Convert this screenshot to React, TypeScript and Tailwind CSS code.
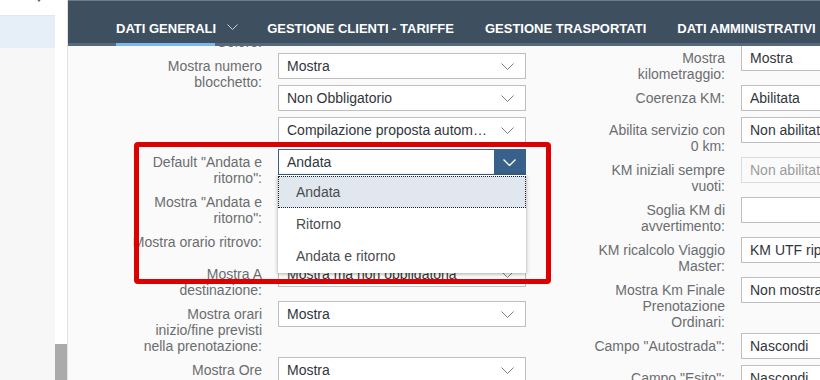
import React from "react";

const labelCls =
  "w-[132px] shrink-0 text-right pt-[5px] pb-[3px] leading-4 text-[14px] text-[#6a6d70] whitespace-nowrap";

function Chevron({ color = "#7b7f83", width = 1, w = 13, h = 7 }: { color?: string; width?: number; w?: number; h?: number }) {
  return (
    <svg width={w} height={h} viewBox={`0 0 ${w} ${h}`} className="shrink-0">
      <polyline points={`0.5,0.5 ${w / 2},${h - 0.5} ${w - 0.5},0.5`} fill="none" stroke={color} strokeWidth={width} />
    </svg>
  );
}

function Select({ value, disabled, noIcon }: { value?: string; disabled?: boolean; noIcon?: boolean }) {
  return (
    <div
      className={
        "h-[26px] w-[248px] flex items-center justify-between pl-[8px] pr-[11px] text-[14px] border " +
        (disabled ? "border-[#dcdcdc] bg-[#fafafa] text-[#9a9c9e]" : "border-[#bfbfbf] bg-white text-[#32363a]")
      }
    >
      <span className="whitespace-nowrap overflow-hidden">{value}</span>
      {!noIcon && <Chevron />}
    </div>
  );
}

function Row({ label, children }: { label: string[]; children: React.ReactNode }) {
  return (
    <div className="flex items-start">
      <div className={labelCls}>
        {label.map((l) => (
          <div key={l}>{l}</div>
        ))}
      </div>
      <div className="ml-4 flex flex-col gap-[6px] pb-[6px]">{children}</div>
    </div>
  );
}

function OpenSelect() {
  const options = ["Andata", "Ritorno", "Andata e ritorno"];
  return (
    <div className="relative w-[248px]">
      <div className="h-[26px] flex border border-[#3d5f80] bg-white text-[14px] text-[#32363a]">
        <div className="flex-1 flex items-center pl-[8px]">Andata</div>
        <div className="w-[31px] bg-[#37618a] flex items-center justify-center">
          <Chevron color="#ffffff" width={1.4} />
        </div>
      </div>
      <div className="absolute z-10 left-0 top-[26px] w-[248px] bg-white shadow-[0_1px_4px_rgba(0,0,0,0.35)] py-px">
        {options.map((o, i) => (
          <div
            key={o}
            className={
              "h-[32px] flex items-center pl-[17px] text-[14px] text-[#4a4d50] border " +
              (i === 0 ? "bg-[#e0e7ef] border-dotted border-[#222]" : "border-transparent")
            }
          >
            {o}
          </div>
        ))}
      </div>
    </div>
  );
}

export default function App() {
  const tabs = ["GESTIONE CLIENTI - TARIFFE", "GESTIONE TRASPORTATI", "DATI AMMINISTRATIVI"];

  return (
    <div
      className="relative w-[820px] h-[380px] overflow-hidden flex bg-[#fafafa]"
      style={{ fontFamily: '"Liberation Sans", Arial, sans-serif' }}
    >
      {/* side list */}
      <aside className="w-[55px] shrink-0 flex flex-col bg-[#f7f7f7]">
        <div className="h-[15px] bg-white relative overflow-hidden">
          <svg width="8" height="6" viewBox="0 0 8 6" className="absolute left-[35px] top-[-3px]">
            <path d="M0 0 L4 5 L8 0 Z" fill="#4a6a8a" />
          </svg>
        </div>
        <div className="h-[33px] bg-[#e6eef7] border-t border-[#e3e6ea]" />
      </aside>
      <div className="w-[12px] shrink-0 bg-white flex flex-col justify-end">
        <div className="h-[36px] bg-[#ababab]" />
      </div>
      <div className="w-px shrink-0 bg-[#e3e3e3]" />

      <main className="flex-1 flex flex-col min-w-0">
        <header className="shrink-0 bg-[#3e4f60]">
          <div className="h-[43px] border-t border-[#6f7b87] flex items-center pt-[14px] pl-12 text-[13px] font-bold text-white whitespace-nowrap">
            <span>DATI GENERALI</span>
            <span className="ml-[11px] mr-[29px] mt-[-4px] flex">
              <Chevron color="#c9d2db" width={1} w={11} h={6} />
            </span>
            <div className="flex gap-[31px]">
              {tabs.map((t) => (
                <span key={t}>{t}</span>
              ))}
            </div>
          </div>
          <div className="h-[3px] bg-[#56687b] pl-12">
            <div className="h-full w-[99px] bg-[#7cb8ec]" />
          </div>
        </header>

        <div className="flex-1 overflow-hidden flex items-start pl-[62px]">
          {/* left column */}
          <div className="mt-[-33px] flex flex-col shrink-0">
            <Row label={["Mostra", "Colore:"]}>
              <Select value="Mostra" />
            </Row>
            <Row label={["Mostra numero", "blocchetto:"]}>
              <Select value="Mostra" />
              <Select value="Non Obbligatorio" />
              <Select value="Compilazione proposta autom…" />
            </Row>
            <Row label={['Default "Andata e', 'ritorno":']}>
              <OpenSelect />
            </Row>
            <Row label={['Mostra "Andata e', 'ritorno":']}>
              <Select value="Mostra" />
            </Row>
            <Row label={["Mostra orario ritrovo:"]}>
              <Select value="Mostra" />
            </Row>
            <Row label={["Mostra A", "destinazione:"]}>
              <Select value="Mostra ma non obbligatoria" />
            </Row>
            <Row label={["Mostra orari", "inizio/fine previsti", "nella prenotazione:"]}>
              <Select value="Mostra" />
            </Row>
            <Row label={["Mostra Ore"]}>
              <Select value="Mostra" />
            </Row>
          </div>

          {/* right column */}
          <div className="ml-[67px] mt-[-1px] flex flex-col shrink-0">
            <Row label={["Mostra", "kilometraggio:"]}>
              <Select value="Mostra" />
            </Row>
            <Row label={["Coerenza KM:"]}>
              <Select value="Abilitata" />
            </Row>
            <Row label={["Abilita servizio con", "0 km:"]}>
              <Select value="Non abilitato" />
            </Row>
            <Row label={["KM iniziali sempre", "vuoti:"]}>
              <Select value="Non abilitato" disabled />
            </Row>
            <Row label={["Soglia KM di", "avvertimento:"]}>
              <Select noIcon />
            </Row>
            <Row label={["KM ricalcolo Viaggio", "Master:"]}>
              <Select value="KM UTF ripartiti" />
            </Row>
            <Row label={["Mostra Km Finale", "Prenotazione", "Ordinari:"]}>
              <Select value="Non mostrare" />
            </Row>
            <Row label={['Campo "Autostrada":']}>
              <Select value="Nascondi" />
            </Row>
            <Row label={['Campo "Esito":']}>
              <Select value="Nascondi" />
            </Row>
          </div>
        </div>
      </main>

      {/* highlight annotation */}
      <div className="absolute z-20 left-[134px] top-[142px] w-[417px] h-[142px] border-[5px] border-[#dc0000] rounded-[4px] pointer-events-none" />
    </div>
  );
}
